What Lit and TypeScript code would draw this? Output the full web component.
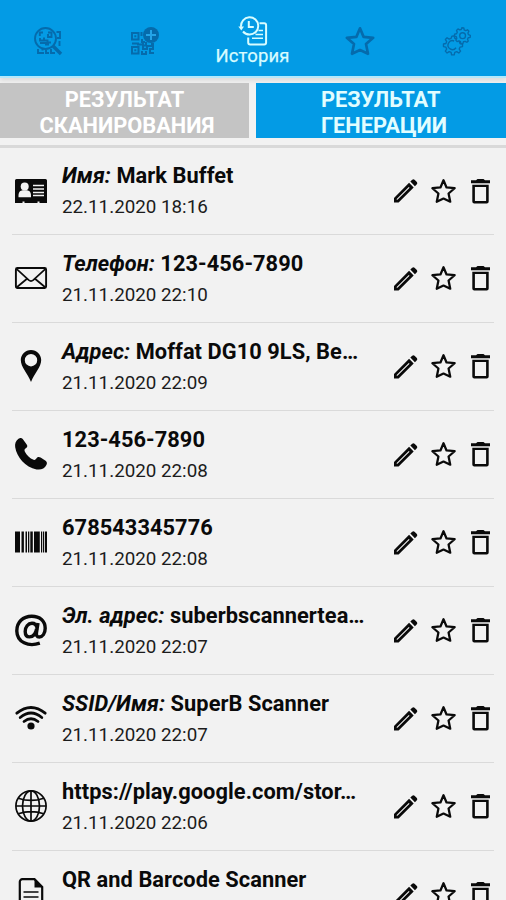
import { LitElement, html, css, svg, nothing } from "lit";
import { customElement } from "lit/decorators.js";

const STAR = "M12 2l2.700 6.400 7.200.7-5.400 4.700 1.500 7.300L12 18.300 6 21.100l1.500-7.300L2.100 9.100l7.200-.7z";

const icons: Record<string, unknown> = {
  card: svg`<path fill="currentColor" d="M1.500 4h29A1.500 1.500 0 0 1 32 5.500V28h-7.500v-1.500h-2V28h-13v-1.500h-2V28H0V5.500A1.500 1.500 0 0 1 1.500 4z"/>
    <circle cx="9.700" cy="11.500" r="4" fill="#f2f2f2"/><path fill="#f2f2f2" d="M3.500 20.500c0-3.500 2-5 4-5.200h4.500c2 .2 4 1.700 4 5.200v1.700H3.500z"/>
    <path stroke="#f2f2f2" stroke-width="1.500" d="M18 10.500h11M18 14h11M18 17.500h11M18 20.600h11"/>`,
  mail: svg`<rect x=".9" y="6" width="30.200" height="20" rx="1.500" fill="none" stroke="currentColor" stroke-width="1.900"/>
    <path fill="none" stroke="currentColor" stroke-width="1.700" d="M1.500 6.800l12.300 11.400q2.200 1.800 4.400 0L30.500 6.800M1.500 25.500l10.800-9M30.500 25.500l-10.800-9"/>`,
  pin: svg`<path fill="currentColor" fill-rule="evenodd" d="M16 0c5.700 0 10.200 4.500 10.200 10.100C26.200 17 19.500 23.500 16 32 12.500 23.500 5.800 17 5.800 10.100 5.800 4.500 10.300 0 16 0zm0 4a6.200 6.200 0 1 0 0 12.400A6.200 6.200 0 0 0 16 4z"/>`,
  phone: svg`<path fill="currentColor" d="M3.500.8c1.800-1.200 3.400-.9 4.600.8l3.600 4.900c1 1.400.7 2.600-.5 3.600-1.700 1.200-2.100 1.900-1.300 3.600 1.700 3.700 5 6.600 8.700 8 1.300.5 1.900-.1 2.800-1.300 1.200-1.700 2.700-1.800 4.200-.9l5 3.300c1.500 1.100 1.700 2.500.8 4.200-1.800 3.800-5.700 5.200-9.800 4.400C10.200 29.200 1.800 19 .2 9.200-.3 5.700.6 2.800 3.500.8z"/>`,
  barcode: svg`<path fill="currentColor" d="M0 5.500h5v21H0zM6.500 5.500h2.400v21H6.500zM10.500 5.500h1.500v21h-1.500zM13 5.500h1.300v21H13zM15.300 5.500h2.500v21h-2.500zM19 5.500h5.800v21H19zM26 5.500h1.200v21H26zM28 5.500h1.200v21H28zM30 5.500h2v21h-2z"/>`,
  at: svg`<g fill="none" stroke="currentColor" stroke-width="3.400"><path d="M24.800 29.200C13.500 33 2 28.500 1.800 17 1.700 8 8 2.200 16.800 2.200c8 0 13.400 4.800 13.400 12.100 0 5.300-2.700 8.700-5.900 8.700-2.600 0-3.200-1.900-2.800-4.500L23 9"/><path d="M21.800 13.500c-.5-3-2.300-4.200-4.800-4.200-4 0-6.800 3.700-6.800 8.200 0 3.400 1.600 5.400 4.300 5.400 3.700 0 6.300-3.500 7.100-8"/></g>`,
  wifi: svg`<g fill="none" stroke="currentColor" stroke-width="2.800" stroke-linecap="round"><path d="M1.800 11.200q14.200-11.400 28.400 0M5.200 15.500q10.800-9 21.600 0M9 19.500q7-5.500 14 0"/></g><circle cx="16" cy="24" r="3.600" fill="currentColor"/>`,
  globe: svg`<g fill="none" stroke="currentColor" stroke-width="1.700"><circle cx="16" cy="16" r="15.100"/><ellipse cx="16" cy="16" rx="8.500" ry="15.100"/><path d="M16 1v30M1 16h30M3.300 8.200q12.700 4.500 25.400 0M3.300 23.800q12.700-4.500 25.400 0"/></g>`,
  doc: svg`<path fill="none" stroke="currentColor" stroke-width="2.200" d="M19.500 1.200H7.300a2.500 2.500 0 0 0-2.500 2.500v24.600a2.500 2.500 0 0 0 2.500 2.500h17.400a2.500 2.500 0 0 0 2.500-2.500V9z"/><path fill="currentColor" d="M19.500.5L28 9.500h-8.500z"/><path stroke="currentColor" stroke-width="1.700" d="M8.500 14h15M8.500 19h15M8.500 24h15"/>`,
  pencil: svg`<path fill="currentColor" fill-rule="evenodd" d="M0 19.700L15.700 4l4.800 4.800L4.800 24.500H0zM2.800 20.900v.8h.8L16.200 9.100l-.8-.8zM17 2.700L19 .8q1.200-1 2.400 0l2.400 2.400q1 1.200 0 2.300l-2 2z"/>`,
  star: svg`<path fill="none" stroke="currentColor" stroke-width="2" stroke-linejoin="round" d=${STAR}/>`,
  trash: svg`<path fill="currentColor" fill-rule="evenodd" d="M0 1.300h5L6.500 0h6L14 1.300h5V4.200H0zM1.300 5.700h16.400v16.800a2 2 0 0 1-2 2H3.300a2 2 0 0 1-2-2zM3.900 8.100V22.100h11.200V8.100z"/>`,
  scan: svg`<g fill="none" stroke="currentColor" stroke-width="1.900"><circle cx="11.500" cy="11.500" r="10.500"/><path d="M9 5.500H5.800V9M6 11v2.500h4M14 5.500h3.500v4.500H14V7M10 10.500v3h3.500v2H17M6 16h6v1.500h3M22.500 5H26v6h-3M25.500 14v5M4 22v4h6M12 23v3h3M17 22v4h4M7.500 22.500h2"/></g><path stroke="currentColor" stroke-width="3.300" d="M19 19l8 8"/>`,
  create: svg`<g fill="none" stroke="currentColor" stroke-width="2"><path d="M1 6h6.500v6.500H1zM1 20h6.500v6.500H1z"/><path d="M10.500 5v4M11 12v3h3M1 16.500h6v1h5v-2M15 15v3.500h-3V22h4v-3h6v3h-3v4h4M11 24v3h4v-3M20 17h3"/></g><path fill="currentColor" d="M3.300 8.300h2v2h-2zM3.300 22.300h2v2h-2z"/><circle cx="20" cy="8" r="8" fill="currentColor"/><path stroke="#24a4e8" stroke-width="2" d="M20 3v10M15 8h10"/>`,
  history: svg`<g fill="none" stroke="currentColor" stroke-width="2"><path d="M2.100 9.800A8.600 8.600 0 1 1 10.500 17.500 8.500 8.500 0 0 1 4 14.500"/><path d="M9.800 4v6h5"/><path d="M20.500 6.200h4.700q1.900 0 1.900 1.900v17.500q0 1.900-1.900 1.900h-14q-2 0-2-2v-5"/><path stroke-width="1.500" d="M19.500 13.500h4.500M16.500 17.500h7.500M13 21.300h11"/></g><path fill="currentColor" d="M-.7 9.500h5.700L2.300 13.500z"/>`,
  gears: svg`<g fill="none" stroke="currentColor" stroke-width="1.400" stroke-linejoin="round"><path d="M9.200 9.500l2.400-.3.600 2.500 2 .8 2.200-1.400 1.800 1.800-1.400 2.200.8 2 2.600.5v2.700l-2.600.6-.8 2 1.400 2.100-1.800 1.900-2.200-1.400-2 .8-.6 2.600H8.900l-.5-2.600-2-.8-2.200 1.400L2.400 25l1.400-2.100-.8-2-2.500-.6v-2.700l2.500-.5.8-2-1.400-2.200 1.800-1.800 2.200 1.400 2-.8z"/><path d="M13.500 21.500a4.600 4.600 0 1 1-2-7"/><path fill="#039be5" d="M19.500.8l2.100.2.300 2 1.600.8 1.900-.9 1.400 1.500-1 1.800.5 1.700 2 .7-.1 2.100-2.100.4-.7 1.500.8 1.900-1.500 1.300-1.800-1-1.700.5-.7 2-2-.2-.4-2-1.600-.8-1.900.8-1.300-1.500 1-1.700-.5-1.800-1.900-.7.100-2 2-.4.800-1.600-.8-1.900L15.500 2l1.700 1 1.700-.4z"/><circle cx="20.300" cy="9" r="3"/></g>`,
};

const icon = (name: string, cls: string, box: string) =>
  html`<svg class=${cls} viewBox=${box} aria-hidden="true">${icons[name]}</svg>`;

interface Entry { icon: string; label?: string; text: string; date?: string }

const entries: Entry[] = [
  { icon: "card", label: "Имя:", text: "Mark Buffet", date: "22.11.2020 18:16" },
  { icon: "mail", label: "Телефон:", text: "123-456-7890", date: "21.11.2020 22:10" },
  { icon: "pin", label: "Адрес:", text: "Moffat DG10 9LS, Be…", date: "21.11.2020 22:09" },
  { icon: "phone", text: "123-456-7890", date: "21.11.2020 22:08" },
  { icon: "barcode", text: "678543345776", date: "21.11.2020 22:08" },
  { icon: "at", label: "Эл. адрес:", text: "suberbscannertea…", date: "21.11.2020 22:07" },
  { icon: "wifi", label: "SSID/Имя:", text: "SuperB Scanner", date: "21.11.2020 22:07" },
  { icon: "globe", text: "https://play.google.com/stor…", date: "21.11.2020 22:06" },
  { icon: "doc", text: "QR and Barcode Scanner" },
];

@customElement("app-root")
export class AppRoot extends LitElement {
  static styles = css`
    :host { display: flex; flex-direction: column; height: 900px; overflow: hidden; background: #f2f2f2; color: #0a0a0a; font-family: Roboto, "Noto Sans", sans-serif; }
    svg { display: block; flex: none; overflow: visible; }
    nav { height: 76px; flex: none; display: grid; grid-template-columns: 96px 97px 119px 96px 98px; background: #039be5; color: #056bac; box-shadow: 0 2px 0 #b4e8fb, 0 5px 4px #dedede; }
    .nav-item { display: flex; flex-direction: column; align-items: center; padding-top: 27px; box-sizing: border-box; }
    .nav-icon { width: 28px; height: 28px; }
    .active { color: #d8fcff; padding-top: 17px; }
    .nav-label { font-size: 18.500px; line-height: 21px; font-weight: 400; margin-top: 1px; -webkit-text-stroke: .25px currentColor; letter-spacing: .15px; }
    .tabs { flex: none; height: 69px; padding-top: 7px; box-sizing: border-box; display: grid; grid-template-columns: 249px 250px; gap: 7px; }
    .tab { height: 55px; display: flex; justify-content: center; align-items: center; background: #c4c4c4; color: #fff; font-weight: 700; font-size: 21.800px; line-height: 26px; padding: 4px 0 0 5px; box-sizing: border-box; }
    .tab.centered { text-align: center; }
    .tab.centered span { padding-right: 5px; }
    .tab.on { background: #039be5; color: #e2fdff; padding-left: 6px; }
    .list { flex: none; border-top: 3px solid #d9d9d9; }
    .row { height: 88px; margin: 0 12px; display: flex; align-items: center; box-sizing: border-box; border-bottom: 1px solid #dadada; }
    .row:first-child { height: 87px; }
    .kind { width: 32px; height: 32px; margin: -1px 0 0 3px; }
    .copy { margin-left: 15px; width: 332px; padding-top: 1px; white-space: nowrap; }
    .title { font-size: 21.800px; line-height: 31px; font-weight: 700; letter-spacing: .06px; }
    .date { font-size: 18.800px; line-height: 32px; min-height: 32px; color: #1c1c1c; font-weight: 400; }
    .pencil { width: 24px; height: 24px; }
    .star { width: 27px; height: 27px; margin-left: 12px; }
    .trash { width: 19px; height: 25px; margin-left: 14px; }
  `;

  render() {
    return html`
      <nav>
        <div class="nav-item">${icon("scan", "nav-icon", "0 0 28 28")}</div>
        <div class="nav-item">${icon("create", "nav-icon", "0 0 28 28")}</div>
        <div class="nav-item active">${icon("history", "nav-icon", "0 0 28 28")}<span class="nav-label">История</span></div>
        <div class="nav-item">${icon("star", "nav-icon", "1.500 1 21 21")}</div>
        <div class="nav-item">${icon("gears", "nav-icon", "0 0 29 29")}</div>
      </nav>
      <div class="tabs">
        <div class="tab centered"><div><span>РЕЗУЛЬТАТ</span><br>СКАНИРОВАНИЯ</div></div>
        <div class="tab on"><div>РЕЗУЛЬТАТ<br>ГЕНЕРАЦИИ</div></div>
      </div>
      <div class="list">
        ${entries.map((e) => html`
          <div class="row">
            ${icon(e.icon, "kind", "0 0 32 32")}
            <div class="copy">
              <div class="title">${e.label ? html`<i>${e.label}</i> ` : nothing}${e.text}</div>
              <div class="date">${e.date ?? nothing}</div>
            </div>
            ${icon("pencil", "pencil", "0 0 25 25")}
            ${icon("star", "star", "0 0 24 24")}
            ${icon("trash", "trash", "0 0 19 25")}
          </div>`)}
      </div>`;
  }
}
